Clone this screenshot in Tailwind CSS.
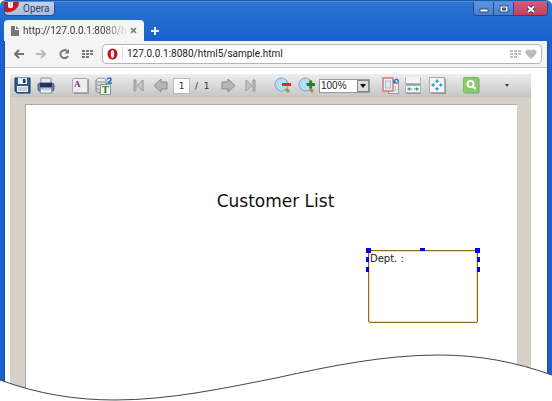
<!DOCTYPE html>
<html lang="en">
<head>
<meta charset="utf-8">
<title>Report viewer</title>
<script src="https://cdn.jsdelivr.net/npm/@tailwindcss/browser@4"></script>
</head>
<body class="bg-white font-['Noto_Sans','Open_Sans',sans-serif] text-[#333]">
<div class="relative flex h-screen flex-col overflow-hidden rounded-t-md border-t border-[#1d5ba8] bg-linear-to-b from-[#2b74d2] to-[#1b60cc] to-10%">

  <!-- Title bar -->
  <header class="relative h-10 shrink-0 border-t border-[#4d8fe0]">
    <div class="flex items-start justify-between pl-1 pr-1">
      <button class="flex h-3.5 w-[51px] items-center overflow-hidden rounded-b border border-t-0 border-[#274f8c] bg-linear-to-b from-[#c3d1ea] to-[#a6bce2] font-[Roboto,sans-serif] text-[10px] leading-[14px] text-[#38445c]">
        <svg class="h-3.5 w-[15px] shrink-0" viewBox="0 0 15 14" aria-hidden="true"><path d="M0 0H14C14 6 9 11 0 10Z" fill="#cf1717"/><path d="M3 0V4C3 7 8 7 8 4V0Z" fill="#fff"/><path d="M5 0H6V4H5Z" fill="#e9b5b5"/></svg>
        <span class="pl-[3px]">Opera</span>
      </button>
      <div class="flex h-3.5 overflow-hidden rounded-b border border-t-0 border-[#24458a]">
        <button aria-label="Minimize" class="flex w-5 items-center justify-center border-r border-[#24458a] bg-linear-to-b from-[#5b93dc] to-[#4880cf]"><svg width="10" height="10" viewBox="0 0 10 10"><rect x="1" y="5" width="8" height="3" fill="#fff" stroke="#34507c"/></svg></button>
        <button aria-label="Maximize" class="flex w-[19px] items-center justify-center bg-linear-to-b from-[#5b93dc] to-[#4880cf]"><svg width="10" height="10" viewBox="0 0 10 10"><rect x="1" y="2" width="8" height="6" fill="#fff" stroke="#34507c"/><rect x="3.500" y="4" width="3" height="2" fill="#4478c0" stroke="#34507c"/></svg></button>
        <button aria-label="Close" class="flex w-[34px] items-center justify-center border-l border-[#24458a] bg-linear-to-b from-[#cf5d70] to-[#c63f5b]"><svg width="10" height="10" viewBox="0 0 10 10"><path d="M2 2.500L8 8M8 2.500L2 8" stroke="#58334a" stroke-width="4"/><path d="M2 2.500L8 8M8 2.500L2 8" stroke="#fff" stroke-width="2"/></svg></button>
      </div>
    </div>
    <div class="absolute bottom-0 left-1 flex items-end">
      <div class="flex h-[21px] w-[140px] items-center rounded-t bg-[#f5f5f5] pl-[7px] pr-1.5">
        <svg class="shrink-0" width="8" height="10" viewBox="0 0 8 10" aria-hidden="true"><path d="M0 0H4V4H8V10H0Z" fill="#777"/><path d="M5 0L8 3H5Z" fill="#777"/></svg>
        <a href="#" class="ml-1 w-[104px] whitespace-nowrap bg-linear-to-r from-[#333] from-75% to-[#333]/10 bg-clip-text font-[Roboto,sans-serif] text-[10px] leading-4 text-transparent">http://127.0.0.1:8080/htm</a>
        <button aria-label="Close tab" class="ml-[3px] flex h-3 w-2 items-center"><svg width="7" height="7" viewBox="0 0 7 7"><path d="M1 1L6 6M6 1L1 6" stroke="#777" stroke-width="1.500"/></svg></button>
      </div>
      <button aria-label="New tab" class="ml-[7px] flex h-[21px] w-2 items-center"><svg width="8" height="8" viewBox="0 0 8 8"><path d="M4 0V8M0 4H8" stroke="#e4efff" stroke-width="2"/></svg></button>
    </div>
  </header>

  <div class="mx-1 flex min-h-0 flex-1 flex-col border-x border-[#164fa8] bg-white">
    <!-- Address bar -->
    <nav class="flex h-[27px] shrink-0 items-center border-b border-[#c4c4c4] bg-[#f4f4f4] pl-2 pr-[5px]">
      <button aria-label="Back" class="w-[22px]"><svg width="12" height="10" viewBox="0 0 12 10"><path d="M11 5H3M6 1L2 5L6 9" fill="none" stroke="#737373" stroke-width="2"/></svg></button>
      <button aria-label="Forward" class="w-[24px]"><svg width="12" height="10" viewBox="0 0 12 10"><path d="M1 5H9M6 1L10 5L6 9" fill="none" stroke="#b8b8b8" stroke-width="2"/></svg></button>
      <button aria-label="Reload" class="w-[23px]"><svg width="12" height="10" viewBox="0 0 12 10"><path d="M9 7A4 4 0 1 1 8 2" fill="none" stroke="#777" stroke-width="2"/><path d="M10 0V4.500H5.500Z" fill="#777"/></svg></button>
      <button aria-label="Speed dial" class="w-5"><svg width="11" height="8" viewBox="0 0 11 8"><path d="M0 1H11M0 4H11M0 7H7" stroke="#777" stroke-width="2" stroke-dasharray="3 1"/></svg></button>
      <div class="flex h-5 min-w-0 flex-1 items-center rounded border border-[#b5b5b5] bg-white pl-1 pr-1">
        <svg class="shrink-0" width="11" height="12" viewBox="0 0 11 12" aria-hidden="true"><ellipse cx="5.500" cy="6" rx="5" ry="5.500" fill="#cc0f16"/><ellipse cx="5.500" cy="6" rx="1.700" ry="3.900" fill="#fff"/></svg>
        <input aria-label="Address" value="127.0.0.1:8080/html5/sample.html" class="ml-1 h-3.5 min-w-0 flex-1 border-l border-[#ddd] pl-1 font-[Roboto,sans-serif] text-[10px] leading-[14px] text-[#222] outline-none">
        <svg width="12" height="8" viewBox="0 0 12 8" aria-hidden="true"><path d="M0 1H11M0 4H11M0 7H7" stroke="#bdbdbd" stroke-width="2" stroke-dasharray="3 1"/></svg>
        <button aria-label="Bookmark" class="ml-[3px]"><svg width="12" height="10" viewBox="0 0 12 10"><path d="M6 10L1 5C-1 1 4-1 6 2C8-1 13 1 11 5Z" fill="#bbb"/></svg></button>
      </div>
    </nav>

    <!-- Report viewer -->
    <main class="ml-[5px] mr-4 mt-1.5 flex min-h-0 flex-1 flex-col bg-[#d5d0c8]">
      <div role="toolbar" aria-label="Report" class="flex h-[23px] shrink-0 items-center bg-linear-to-b from-[#eee] to-[#c5c5c5] font-['DejaVu_Sans',sans-serif]">
        <button aria-label="Save" class="flex w-6 justify-center"><svg width="17" height="17" viewBox="0 0 17 17"><path d="M1 1H16V16H3L1 14Z" fill="#315b89" stroke="#193b66"/><rect x="4" y="1" width="9" height="6" fill="#e9f3fc"/><rect x="9" y="2" width="2.500" height="4" fill="#173a64"/><rect x="3" y="9" width="11" height="6" fill="#f2f2f2"/><path d="M4 11H13M4 13H13" stroke="#aaa"/></svg></button>
        <button aria-label="Print" class="flex w-6 justify-center"><svg width="18" height="17" viewBox="0 0 18 17"><path d="M4 6V1H14V6" fill="#deebfa" stroke="#7c91b6"/><rect x="1" y="6" width="16" height="8" rx="2" fill="#7381a0" stroke="#505a75"/><rect x="3" y="6" width="12" height="4" fill="#243357"/><path d="M4 11H14L15 16H3Z" fill="#f3f8ff" stroke="#8491aa"/><path d="M5 13H13" stroke="#9db0c9"/></svg></button>
        <button aria-label="Font" class="ml-2.5 flex w-6 justify-center"><svg width="17" height="17" viewBox="0 0 17 17"><rect x="2" y="2" width="15" height="15" rx="1" fill="#999"/><rect x=".5" y="1.500" width="15" height="14" rx="1" fill="#eee" stroke="#aaa"/><text x="2" y="10" font-family="Liberation Serif,serif" font-weight="700" font-size="9" fill="#791d78">A</text></svg></button>
        <button aria-label="Text data" class="flex w-6 justify-center"><svg width="18" height="18" viewBox="0 0 18 18"><path d="M1 3V14C2 16 9 16 11 14V3Z" fill="#d5d5d5" stroke="#888"/><ellipse cx="6" cy="3" rx="5" ry="2" fill="#eee" stroke="#999"/><path d="M1 7C3 9 9 9 11 7M1 11C3 13 9 13 11 11" fill="none" stroke="#999"/><rect x="5.500" y="7.500" width="10" height="10" fill="#f3f8f0" stroke="#8a9a88"/><text x="7" y="16" font-family="Liberation Serif,serif" font-weight="700" font-size="10" fill="#127522">T</text><path d="M12 2.500C13 0 17 1 16 3L13 6H17" fill="none" stroke="#3270d5" stroke-width="1.500"/></svg></button>
        <button aria-label="First page" class="ml-3 flex w-[22px] justify-center"><svg width="12" height="13" viewBox="0 0 12 13"><path d="M1 1H3V12H1ZM10 1V12L4 6.500Z" fill="#c4c4c4" stroke="#969696"/></svg></button>
        <button aria-label="Previous page" class="flex w-[22px] justify-center"><svg width="16" height="15" viewBox="0 0 16 15"><path d="M1 7.500L8 1V4H14V11H8V14Z" fill="#b6b6b6" stroke="#888"/></svg></button>
        <input aria-label="Page number" value="1" class="ml-px h-4 w-[17px] border border-[#bbb] bg-white text-center text-[9px] text-[#333] outline-none">
        <span class="ml-[5px] w-[22px] whitespace-pre text-[9px] leading-4 text-[#333]">/  1</span>
        <button aria-label="Next page" class="flex w-[22px] justify-center"><svg width="16" height="15" viewBox="0 0 16 15"><path d="M15 7.500L8 1V4H2V11H8V14Z" fill="#b6b6b6" stroke="#888"/></svg></button>
        <button aria-label="Last page" class="flex w-[22px] justify-center"><svg width="12" height="13" viewBox="0 0 12 13"><path d="M9 1H11V12H9ZM2 1V12L8 6.500Z" fill="#c4c4c4" stroke="#969696"/></svg></button>
        <button aria-label="Zoom out" class="ml-2.5 flex w-6 justify-center"><svg width="18" height="17" viewBox="0 0 18 17"><path d="M11 11L15 15" stroke="#b98236" stroke-width="3"/><circle cx="7.500" cy="7.500" r="6.500" fill="#b9dcf5" stroke="#76a8cf"/><path d="M8 7.500H17" stroke="#df2b1b" stroke-width="3"/></svg></button>
        <button aria-label="Zoom in" class="flex w-6 justify-center"><svg width="18" height="17" viewBox="0 0 18 17"><path d="M11 11L15 15" stroke="#b98236" stroke-width="3"/><circle cx="7.500" cy="7.500" r="6.500" fill="#b9dcf5" stroke="#76a8cf"/><path d="M8.500 7.500H17M12.700 3.500V11.500" stroke="#23852b" stroke-width="3"/></svg></button>
        <div class="relative h-3.5 w-[51px] border border-[#999] bg-white">
          <select aria-label="Zoom" class="block h-full w-full appearance-none pl-px font-['Liberation_Sans',sans-serif] text-[10px] leading-3 text-[#222]"><option>100%</option></select>
          <span class="pointer-events-none absolute inset-y-0 right-0 flex w-3 items-center justify-center border border-[#888] bg-[#ddd]"><svg width="6" height="4" viewBox="0 0 6 4"><path d="M0 0H6L3 4Z" fill="#111"/></svg></span>
        </div>
        <button aria-label="Rotate pages" class="ml-2.5 flex w-[22px] justify-center"><svg width="18" height="17" viewBox="0 0 18 17"><rect x="6.500" y="6.500" width="10" height="10" fill="#eee" stroke="#999"/><rect x="9.500" y="9.500" width="4" height="4" fill="#d8e7f0" stroke="#bcc5ca"/><rect x="1" y="1" width="10" height="13" fill="#f5e9e8" stroke="#cf7e7e" stroke-width="1.500"/><rect x="3.500" y="4" width="5" height="7" fill="#dceaf3" stroke="#a9bdca"/><path d="M16 6C17 2 14 1 12.500 4" fill="none" stroke="#4874b9" stroke-width="1.500"/><path d="M11 2V6H15Z" fill="#4874b9"/></svg></button>
        <button aria-label="Fit width" class="flex w-[22px] justify-center"><svg width="17" height="17" viewBox="0 0 17 17"><path d="M1 7.500H16M1 16.500H16" stroke="#999"/><path d="M.5 0V6.500H15.500V0M.5 15.500V8.500H15.500V15.500Z" fill="#f4f4f4" stroke="#b5b5b5"/><path d="M2 12L5 10V14ZM14 12L11 10V14ZM5 11.500H7V12.500H5ZM9 11.500H11V12.500H9Z" fill="#2d9bcd"/></svg></button>
        <button aria-label="Fit page" class="ml-0.5 flex w-[22px] justify-center"><svg width="17" height="17" viewBox="0 0 17 17"><rect x="2" y="2" width="15" height="15" fill="#999"/><rect x=".5" y=".5" width="15" height="15" fill="#f4f4f4" stroke="#aaa"/><path d="M8 2L10 5H8.500V6H7.500V5H6ZM8 14L10 11H8.500V10H7.500V11H6ZM2 8L5 6V7.500H6V8.500H5V10ZM14 8L11 6V7.500H10V8.500H11V10Z" fill="#2d9bcd"/></svg></button>
        <button aria-label="Search" class="ml-3 flex w-[22px] justify-center"><svg width="17" height="17" viewBox="0 0 17 17"><rect x="1.500" y="1.500" width="15" height="15" rx="1" fill="#8b9e80"/><rect x=".5" y=".5" width="15" height="15" rx="1" fill="#86cf68" stroke="#76b85c"/><circle cx="7.500" cy="7" r="3" fill="none" stroke="#fff" stroke-width="2"/><path d="M9.500 9L12.500 12" stroke="#fff" stroke-width="2"/></svg></button>
        <button aria-label="More" class="ml-3.5 flex w-[22px] justify-center"><svg width="4" height="3" viewBox="0 0 4 3"><path d="M0 0H4L2 3Z" fill="#444"/></svg></button>
      </div>
      <article class="relative ml-[15px] mr-3.5 mt-[7px] min-h-0 flex-1 border-l border-t border-[#aaa] bg-white pt-[84px] font-['DejaVu_Sans',sans-serif]">
        <h1 class="pl-2 text-center text-[17px] leading-6 text-[#111]">Customer List</h1>
        <!-- Selected field with its resize handles -->
        <div class="absolute right-[39px] top-[145px] h-[73px] w-[110px] rounded-xs border border-[#946816] bg-white pl-px text-[10px] leading-4 text-[#222] ring-1 ring-inset ring-[#f0dfbd]">
          <span>Dept. :</span>
          <i class="absolute -left-[3px] -top-[3px] h-[5px] w-[5px] bg-[#0000f0]"></i>
          <i class="absolute -top-[3px] left-[51px] h-[3px] w-[5px] bg-[#0000f0]"></i>
          <i class="absolute -right-[3px] -top-[3px] h-[5px] w-[5px] bg-[#0000f0]"></i>
          <i class="absolute -left-[3px] top-[6px] h-[5px] w-[3px] bg-[#0000f0]"></i>
          <i class="absolute -left-[3px] top-[16px] h-[5px] w-[3px] bg-[#0000f0]"></i>
          <i class="absolute -right-[3px] top-[6px] h-[5px] w-[3px] bg-[#0000f0]"></i>
          <i class="absolute -right-[3px] top-[16px] h-[5px] w-[3px] bg-[#0000f0]"></i>
        </div>
      </article>
    </main>
  </div>

  <!-- Wavy lower edge -->
  <svg class="absolute bottom-0 left-0 h-[51px] w-full" viewBox="0 350 552 51" preserveAspectRatio="none" aria-hidden="true">
    <path d="M0 380C38 394 76 400 115 400C170 400 225 388 276 378C330 366 385 355 438 355C480 355 515 362 552 375V402H0Z" fill="#fff"/>
    <path d="M0 380C38 394 76 400 115 400C170 400 225 388 276 378C330 366 385 355 438 355C480 355 515 362 552 375" fill="none" stroke="#444"/>
  </svg>
</div>
</body>
</html>
